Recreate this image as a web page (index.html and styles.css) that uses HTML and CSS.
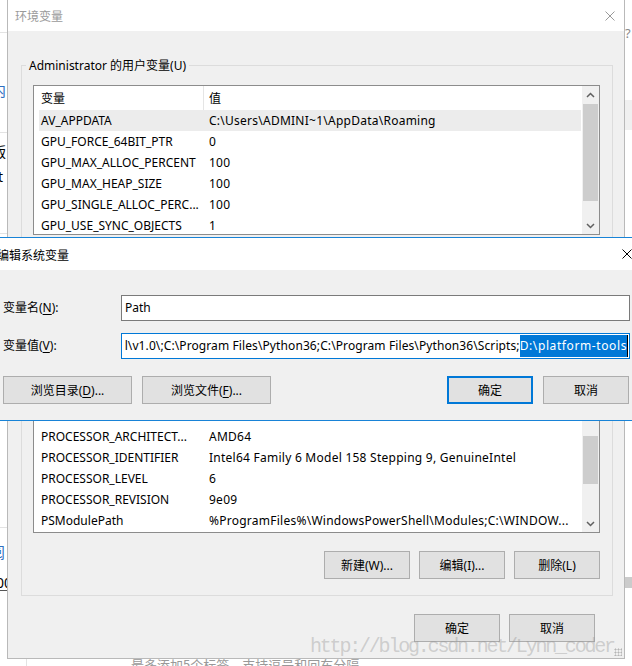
FILE: index.html
```html
<!DOCTYPE html>
<html lang="zh-CN">
<head>
    <meta charset="UTF-8">
    <meta name="viewport" content="width=device-width, initial-scale=1.0">
    <title>环境变量</title>
    <link rel="stylesheet" href="styles.css">
</head>
<body>
    <!-- page behind the dialogs, only its edges show -->
    <div class="page">
        <div class="page-left">
            <div class="bg-rule rule-1"></div>
            <div class="bg-link link-1">的内</div>
            <div class="bg-rule rule-2"></div>
            <div class="bg-text text-1">出版</div>
            <div class="bg-text text-2">t</div>
            <div class="bg-rule rule-3"></div>
            <div class="bg-rule rule-4"></div>
            <div class="bg-link link-2">阅</div>
            <div class="bg-text text-3">00</div>
        </div>
        <div class="page-mid">
            <div class="bg-field">最多添加5个标签，支持逗号和回车分隔</div>
        </div>
        <div class="page-right">
            <div class="bg-help">?</div>
            <div class="bg-band band-1"></div>
            <div class="bg-band band-2"></div>
        </div>
    </div>

    <div class="window env-window">
        <div class="titlebar">
            <span class="title">环境变量</span>
            <span class="close-box">
                <svg width="10" height="10" viewBox="0 0 10 10"><path d="M0.5 0.5L9.5 9.5M9.5 0.5L0.5 9.5"/></svg>
            </span>
        </div>
        <div class="env-body">
            <fieldset class="group user-group">
                <legend>Administrator 的用户变量(U)</legend>
                <div class="list user-list">
                    <div class="list-view">
                        <div class="list-head"><span>变量</span><span>值</span></div>
                        <div class="list-rows">
                            <div class="row selected"><span>AV_APPDATA</span><span>C:\Users\ADMINI~1\AppData\Roaming</span></div>
                            <div class="row"><span>GPU_FORCE_64BIT_PTR</span><span>0</span></div>
                            <div class="row"><span>GPU_MAX_ALLOC_PERCENT</span><span>100</span></div>
                            <div class="row"><span>GPU_MAX_HEAP_SIZE</span><span>100</span></div>
                            <div class="row"><span>GPU_SINGLE_ALLOC_PERC...</span><span>100</span></div>
                            <div class="row"><span>GPU_USE_SYNC_OBJECTS</span><span>1</span></div>
                        </div>
                    </div>
                    <div class="scrollbar">
                        <div class="sb-arrow">
                            <svg width="9" height="6" viewBox="0 0 9 6"><polyline points="1,5 4.5,1.5 8,5"/></svg>
                        </div>
                        <div class="sb-track"><div class="sb-thumb"></div></div>
                        <div class="sb-arrow">
                            <svg width="9" height="6" viewBox="0 0 9 6"><polyline points="1,1 4.5,4.5 8,1"/></svg>
                        </div>
                    </div>
                </div>
                <div class="btn-row">
                    <button class="btn">新建(N)...</button>
                    <button class="btn">编辑(E)...</button>
                    <button class="btn">删除(D)</button>
                </div>
            </fieldset>

            <fieldset class="group sys-group">
                <legend>系统变量(S)</legend>
                <div class="list sys-list">
                    <div class="list-view">
                        <div class="list-head"><span>变量</span><span>值</span></div>
                        <div class="list-rows">
                            <div class="row"><span>PROCESSOR_ARCHITECT...</span><span>AMD64</span></div>
                            <div class="row"><span>PROCESSOR_IDENTIFIER</span><span>Intel64 Family 6 Model 158 Stepping 9, GenuineIntel</span></div>
                            <div class="row"><span>PROCESSOR_LEVEL</span><span>6</span></div>
                            <div class="row"><span>PROCESSOR_REVISION</span><span>9e09</span></div>
                            <div class="row"><span>PSModulePath</span><span>%ProgramFiles%\WindowsPowerShell\Modules;C:\WINDOW...</span></div>
                        </div>
                    </div>
                    <div class="scrollbar">
                        <div class="sb-arrow">
                            <svg width="9" height="6" viewBox="0 0 9 6"><polyline points="1,5 4.5,1.5 8,5"/></svg>
                        </div>
                        <div class="sb-track"><div class="sb-thumb"></div></div>
                        <div class="sb-arrow">
                            <svg width="9" height="6" viewBox="0 0 9 6"><polyline points="1,1 4.5,4.5 8,1"/></svg>
                        </div>
                    </div>
                </div>
                <div class="btn-row">
                    <button class="btn">新建(W)...</button>
                    <button class="btn">编辑(I)...</button>
                    <button class="btn">删除(L)</button>
                </div>
            </fieldset>

            <div class="dialog-buttons">
                <button class="btn">确定</button>
                <button class="btn">取消</button>
            </div>
        </div>
        <div class="grip"></div>
    </div>

    <div class="window edit-window">
        <div class="titlebar">
            <span class="title">编辑系统变量</span>
            <span class="close-box">
                <svg width="10" height="10" viewBox="0 0 10 10"><path d="M0.5 0.5L9.5 9.5M9.5 0.5L0.5 9.5"/></svg>
            </span>
        </div>
        <div class="edit-body">
            <div class="field-row">
                <label class="field-label">变量名(<u>N</u>):</label>
                <div class="field">Path</div>
            </div>
            <div class="field-row">
                <label class="field-label">变量值(<u>V</u>):</label>
                <div class="field focused"><span class="before">l\v1.0\;C:\Program Files\Python36;C:\Program Files\Python36\Scripts;</span><span class="sel">D:\platform-tools</span><span class="caret"></span></div>
            </div>
            <div class="edit-buttons">
                <button class="btn wide">浏览目录(<u>D</u>)...</button>
                <button class="btn wide">浏览文件(<u>F</u>)...</button>
                <button class="btn default push">确定</button>
                <button class="btn">取消</button>
            </div>
        </div>
    </div>

    <div class="watermark">http://blog.csdn.net/Lynn_coder</div>
</body>
</html>
```

FILE: styles.css
```css
* {
    box-sizing: border-box;
}
html, body {
    margin: 0;
    height: 100%;
    overflow: hidden;
}
body {
    position: relative;
    font-family: "Noto Sans", "Noto Sans CJK SC", sans-serif;
    font-size: 12px;
    color: #000;
    background: #fff;
}

/* backdrop page */
.page {
    display: flex;
    height: 666px;
}
.page-left {
    width: 7px;
    overflow: hidden;
    white-space: nowrap;
}
.page-mid {
    flex: 1;
}
.page-right {
    width: 8px;
    overflow: hidden;
}
.bg-rule {
    height: 1px;
    background: #e3e3e3;
}
.rule-1 { margin-top: 32px; }
.rule-2 { margin-top: 34px; }
.rule-3 { margin-top: 48px; }
.rule-4 { margin-top: 293px; }
.bg-link,
.bg-text {
    height: 16px;
    line-height: 16px;
    font-size: 15px;
}
.bg-link {
    color: #2d6fc2;
}
.link-1 { margin: 49px 0 0 -24px; }
.link-2 { margin: 16px 0 0 -10px; }
.text-1 { margin: 11px 0 0 -22px; font-size: 14px; }
.text-2 { margin: 9px 0 0 -2px; font-size: 14px; }
.text-3 {
    margin: 15px 0 0 -4px;
    font-size: 14px;
    border-bottom: 1px solid #555;
}
.bg-field {
    margin: 655px 0 0 19px;
    padding-left: 104px;
    border-left: 1px solid #e3e3e3;
    line-height: 20px;
    font-size: 13px;
    color: #999;
    font-family: "Noto Sans CJK SC", sans-serif;
}
.bg-help {
    margin-top: 25px;
    padding-left: 1px;
    line-height: 16px;
    font-size: 13px;
    color: #8a8a8a;
}
.bg-band {
    background: #f0f0f0;
}
.band-1 { margin-top: 59px; height: 30px; }
.band-2 { margin-top: 447px; height: 11px; background: #cbcbcb; }

/* windows */
.window {
    position: absolute;
    display: flex;
    flex-direction: column;
    background: #f0f0f0;
}
.titlebar {
    display: flex;
    align-items: center;
    background: #fff;
}
.title {
    flex: 1;
    font-family: "Noto Sans CJK SC", sans-serif;
}
.close-box {
    display: flex;
    align-items: center;
    justify-content: center;
}
.close-box path {
    stroke: #000;
    stroke-width: 1;
    fill: none;
}

.env-window {
    left: 7px;
    top: -1px;
    width: 618px;
    height: 660px;
    border: 1px solid #b9b9b9;
}
.env-window .titlebar {
    height: 31px;
    padding-left: 7px;
}
.env-window .title {
    color: #9a9a9a;
}
.env-window .close-box {
    width: 10px;
    margin-right: 9px;
}
.env-window .close-box path {
    stroke: #9a9a9a;
}
.env-body {
    flex: 1;
    display: flex;
    flex-direction: column;
    padding: 26px 11px 16px 13px;
}

.group {
    margin: 0;
    padding: 11px 12px 16px 11px;
    border: 1px solid #dcdcdc;
    min-width: 0;
    display: flex;
    flex-direction: column;
}
.group legend {
    margin-left: -7px;
    padding: 0 3px;
    line-height: 17px;
}
.sys-group {
    flex: 1;
    margin-top: 12px;
}

.list {
    display: flex;
    border: 1px solid #8c8c8c;
    background: #fff;
}
.user-list {
    height: 150px;
}
.sys-list {
    flex: 1;
    min-height: 0;
}
.list-view {
    flex: 1;
    min-width: 0;
    display: flex;
    flex-direction: column;
    padding: 0 1px 0 5px;
}
.list-head,
.row {
    display: grid;
    grid-template-columns: 165px 1fr;
    white-space: nowrap;
}
.list-head {
    height: 24px;
    line-height: 24px;
    font-family: "Noto Sans CJK SC", sans-serif;
}
.list-head span:first-child {
    border-right: 1px solid #e5e5e5;
}
.list-head span:first-child,
.row span:first-child {
    padding-left: 2px;
    overflow: hidden;
}
.list-head span:last-child,
.row span:last-child {
    padding-left: 5px;
    overflow: hidden;
}
.row span:last-child {
    letter-spacing: 0.25px;
}
.list-rows {
    flex: 1;
    min-height: 0;
    display: flex;
    flex-direction: column;
    overflow: hidden;
}
.sys-list .list-rows {
    justify-content: flex-end;
    padding-bottom: 1px;
}
.row {
    flex: none;
    height: 21px;
    line-height: 21px;
}
.row.selected {
    background: #ececec;
}

.scrollbar {
    width: 17px;
    display: flex;
    flex-direction: column;
    background: #f0f0f0;
}
.sb-arrow {
    height: 17px;
    display: flex;
    align-items: center;
    justify-content: center;
}
.sb-arrow polyline {
    fill: none;
    stroke: #606060;
    stroke-width: 1.5;
}
.sb-track {
    flex: 1;
    display: flex;
    flex-direction: column;
    padding: 1px 1px;
}
.sb-thumb {
    background: #cdcdcd;
}
.user-list .sb-thumb {
    height: 97px;
}
.sys-list .sb-track {
    justify-content: flex-end;
    padding-bottom: 31px;
}
.sys-list .sb-thumb {
    height: 48px;
}

.btn {
    display: flex;
    align-items: center;
    justify-content: center;
    height: 28px;
    width: 86px;
    padding: 0;
    margin: 0;
    font: inherit;
    font-family: "Noto Sans", "Noto Sans CJK SC", sans-serif;
    color: #000;
    background: #e1e1e1;
    border: 1px solid #adadad;
    border-radius: 0;
}
.btn u {
    text-underline-offset: 2px;
}
.btn-row {
    display: flex;
    justify-content: flex-end;
    gap: 9px;
    margin-top: 18px;
}
.dialog-buttons {
    display: flex;
    justify-content: flex-end;
    gap: 9px;
    margin-top: 18px;
    padding-right: 18px;
}
.grip {
    position: absolute;
    right: 2px;
    bottom: 2px;
    width: 8px;
    height: 8px;
    background-image: radial-gradient(#b5b5b5 45%, transparent 50%);
    background-size: 3px 3px;
}

/* edit dialog, on top */
.edit-window {
    left: -10px;
    top: 237px;
    width: 660px;
    height: 184px;
    border: 1px solid #1883d7;
}
.edit-window .titlebar {
    height: 32px;
    padding-left: 6px;
}
.edit-window .close-box {
    width: 44px;
}
.edit-body {
    flex: 1;
    padding: 25px 19px 16px 12px;
}
.field-row {
    display: flex;
}
.field-row + .field-row {
    margin-top: 12px;
}
.field-label {
    width: 118px;
    line-height: 26px;
}
.field-label u {
    text-underline-offset: 2px;
}
.field {
    flex: 1;
    min-width: 0;
    height: 26px;
    padding: 0 3px;
    line-height: 24px;
    background: #fff;
    border: 1px solid #7a7a7a;
    white-space: nowrap;
}
.field.focused {
    display: flex;
    align-items: center;
    justify-content: flex-end;
    overflow: hidden;
    padding-right: 1px;
    border-color: #0078d7;
}
.field.focused span {
    flex: none;
}
.before {
    letter-spacing: 0.1px;
}
.sel {
    line-height: 22px;
    letter-spacing: 0.6px;
    background: #0078d7;
    color: #fff;
}
.caret {
    width: 1px;
    height: 22px;
    background: #000;
}
.edit-buttons {
    display: flex;
    gap: 10px;
    margin-top: 17px;
    padding-right: 1px;
}
.btn.wide {
    width: 129px;
}
.btn.push {
    margin-left: auto;
}
.btn.default {
    border-color: #0078d7;
    box-shadow: inset 0 0 0 1px #0078d7;
}

.watermark {
    position: absolute;
    left: 310px;
    top: 637px;
    font-family: "Liberation Mono", monospace;
    font-size: 20px;
    line-height: 20px;
    letter-spacing: -2.2px;
    color: rgba(150, 150, 150, 0.4);
    white-space: nowrap;
}
```
